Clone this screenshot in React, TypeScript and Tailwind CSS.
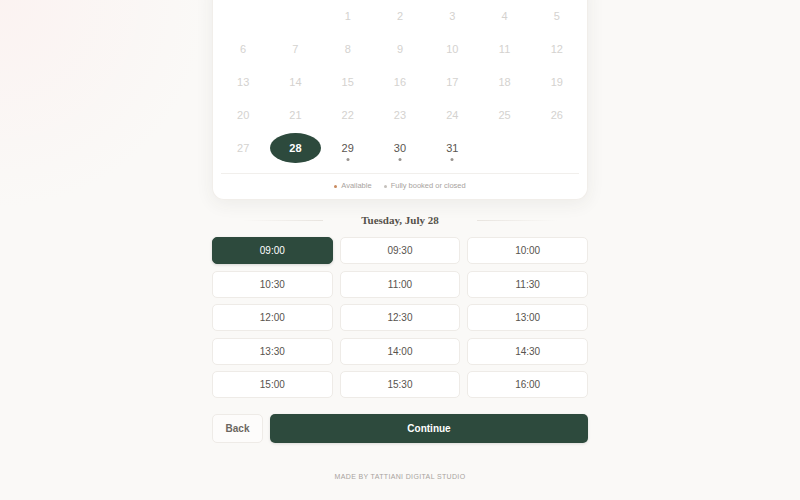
import React from "react";

const days: (number | null)[] = [
  null, null, 1, 2, 3, 4, 5,
  6, 7, 8, 9, 10, 11, 12,
  13, 14, 15, 16, 17, 18, 19,
  20, 21, 22, 23, 24, 25, 26,
  27, 28, 29, 30, 31, null, null,
];

const slots = [
  "09:00", "09:30", "10:00",
  "10:30", "11:00", "11:30",
  "12:00", "12:30", "13:00",
  "13:30", "14:00", "14:30",
  "15:00", "15:30", "16:00",
];

export default function App() {
  return (
    <div
      className="w-[800px] h-[500px] overflow-hidden bg-[#faf9f7] bg-[radial-gradient(circle_at_0%_0%,rgba(255,228,228,0.3),rgba(250,249,247,0)_22%)]"
      style={{ fontFamily: '"Liberation Sans", Arial, sans-serif' }}
    >
      <div className="w-[376px] mx-auto flex flex-col">
        {/* Calendar card */}
        <div className="-mt-[19px] pt-[20px] bg-white rounded-b-[12px] shadow-[0_4px_18px_rgba(60,50,40,0.07)] border border-[#f1eeea] border-t-0 px-[5px] pb-[7px]">
          <div className="grid grid-cols-7 gap-x-[2px] gap-y-[3px]">
            {days.map((d, i) => {
              if (d === null) return <div key={i} className="h-[30px]" />;
              const selected = d === 28;
              const available = d >= 29;
              return (
                <div
                  key={i}
                  className={
                    "relative h-[30px] flex items-center justify-center text-[11px] " +
                    (selected
                      ? "bg-[#2d4a3d] text-white font-bold rounded-[50%]"
                      : available
                      ? "text-[#5a5550]"
                      : "text-[#d4d2cf]")
                  }
                >
                  {d}
                  {available && (
                    <span className="absolute left-1/2 -translate-x-1/2 top-[25px] w-[3px] h-[3px] rounded-full bg-[#9a9590]" />
                  )}
                </div>
              );
            })}
          </div>
          <div className="mt-[10px] mx-[3px] h-px bg-[#f1efec]" />
          <div className="mt-[6px] flex items-center justify-center gap-[12px] text-[7.5px] text-[#a8a39e] leading-[12px]">
            <div className="flex items-center gap-[4px]">
              <span className="w-[3px] h-[3px] rounded-full bg-[#c98a5e]" />
              <span>Available</span>
            </div>
            <div className="flex items-center gap-[4px]">
              <span className="w-[3px] h-[3px] rounded-full bg-[#c4c0bb]" />
              <span>Fully booked or closed</span>
            </div>
          </div>
        </div>

        {/* Date heading */}
        <div className="mt-[12px] flex items-center gap-[38px] px-[30px]">
          <div className="flex-1 h-px bg-[linear-gradient(90deg,rgba(232,228,223,0),rgba(232,228,223,1))]" />
          <div
            className="text-[11px] font-bold text-[#55514a] leading-[16px]"
            style={{ fontFamily: '"Liberation Serif", "Times New Roman", serif' }}
          >
            Tuesday, July 28
          </div>
          <div className="flex-1 h-px bg-[linear-gradient(90deg,rgba(232,228,223,1),rgba(232,228,223,0))]" />
        </div>

        {/* Slots */}
        <div className="mt-[9px] grid grid-cols-3 gap-x-[7px] gap-y-[6.5px]">
          {slots.map((s) => {
            const sel = s === "09:00";
            return (
              <div
                key={s}
                className={
                  "h-[27px] rounded-[5px] flex items-center justify-center text-[10px] " +
                  (sel
                    ? "bg-[#2d4a3d] text-white border border-[#2d4a3d] shadow-[0_1px_3px_rgba(0,0,0,0.15)]"
                    : "bg-white text-[#57534e] border border-[#eeebe7]")
                }
              >
                {s}
              </div>
            );
          })}
        </div>

        {/* Buttons */}
        <div className="mt-[16px] flex gap-[7px]">
          <div className="w-[51px] h-[29px] rounded-[5px] border border-[#eeebe7] bg-[#fdfcfb] flex items-center justify-center text-[10px] font-bold text-[#6b6660]">
            Back
          </div>
          <div className="flex-1 h-[29px] rounded-[5px] bg-[#2d4a3d] flex items-center justify-center text-[10px] font-bold text-white shadow-[0_1px_3px_rgba(0,0,0,0.12)]">
            Continue
          </div>
        </div>

        {/* Footer */}
        <div className="mt-[29px] text-center text-[7px] tracking-[0.05em] text-[#a8a39e] leading-[10px]">
          MADE BY TATTIANI DIGITAL STUDIO
        </div>
      </div>
    </div>
  );
}
